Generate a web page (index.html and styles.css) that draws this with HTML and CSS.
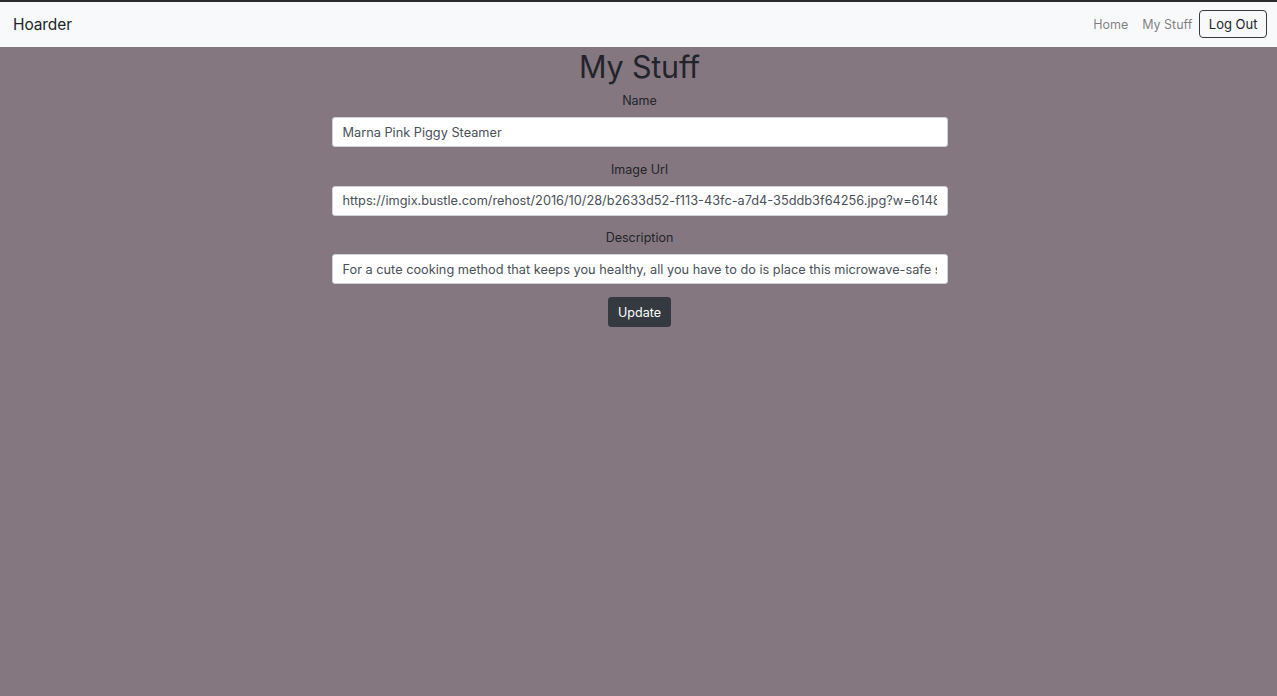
FILE: index.html
```html
<!DOCTYPE html>
<html lang="en">
<head>
<meta charset="utf-8">
<title>Hoarder</title>
<link rel="stylesheet" href="styles.css">
</head>
<body>
<nav class="navbar">
  <a class="brand" href="#">Hoarder</a>
  <div class="nav-right">
    <a class="nav-link" href="#">Home</a>
    <a class="nav-link" href="#">My Stuff</a>
    <button class="btn-logout" type="button">Log Out</button>
  </div>
</nav>
<main class="page">
  <h1 class="title">My Stuff</h1>
  <form class="form">
    <div class="group">
      <label class="label" for="name">Name</label>
      <input class="input" id="name" type="text" value="Marna Pink Piggy Steamer">
    </div>
    <div class="group">
      <label class="label" for="img">Image Url</label>
      <input class="input" id="img" type="text" value="https://imgix.bustle.com/rehost/2016/10/28/b2633d52-f113-43fc-a7d4-35ddb3f64256.jpg?w=6148&amp;fit=crop">
    </div>
    <div class="group">
      <label class="label" for="desc">Description</label>
      <input class="input" id="desc" type="text" value="For a cute cooking method that keeps you healthy, all you have to do is place this microwave-safe silicone pig over your food.">
    </div>
    <button class="btn-update" type="button">Update</button>
  </form>
</main>
</body>
</html>
```
FILE: styles.css
```css
* { box-sizing: border-box; }
html, body { height: 100%; }
body {
  margin: 0;
  font-family: Inter, "Noto Sans", "Liberation Sans", sans-serif;
  color: #212529;
  background: #857780;
  border-top: 2px solid #2b2b2e;
  display: flex;
  flex-direction: column;
}
.navbar {
  height: 45px;
  background: #f8f9fa;
  display: flex;
  align-items: center;
  justify-content: space-between;
  padding: 0 10px 1px 13px;
  flex-shrink: 0;
}
.brand {
  font-size: 15.5px;
  color: #212529;
  text-decoration: none;
  letter-spacing: -0.1px;
}
.nav-right {
  display: flex;
  align-items: center;
}
.nav-link {
  font-size: 12.5px;
  color: rgba(0,0,0,.5);
  text-decoration: none;
  padding: 0 7px;
}
.btn-logout {
  font-family: inherit;
  font-size: 13px;
  color: #212529;
  background: transparent;
  border: 1px solid #343a40;
  border-radius: 4px;
  height: 28px;
  padding: 0 8.5px;
}
.page {
  flex: 1;
  display: flex;
  flex-direction: column;
  align-items: center;
  padding-left: 2px;
}
.title {
  margin: 0;
  font-size: 30.5px;
  font-weight: 400;
  line-height: 40px;
  letter-spacing: -0.2px;
}
.form {
  width: 616px;
  display: flex;
  flex-direction: column;
  align-items: center;
  margin-top: 4px;
}
.group {
  width: 100%;
  display: flex;
  flex-direction: column;
  align-items: center;
  margin-bottom: 12.5px;
}
.label {
  font-size: 12.5px;
  line-height: 20px;
  margin-bottom: 6px;
}
.input {
  width: 100%;
  height: 30px;
  font-family: inherit;
  font-size: 12.75px;
  color: #495057;
  background: #fff;
  border: 1px solid #ced4da;
  border-radius: 3px;
  padding: 0 10px;
}
.btn-update {
  margin-top: 0;
  font-family: inherit;
  font-size: 12.5px;
  color: #fff;
  background: #343a40;
  border: 1px solid #343a40;
  border-radius: 3px;
  height: 30px;
  padding: 1px 9px 0;
}
```
